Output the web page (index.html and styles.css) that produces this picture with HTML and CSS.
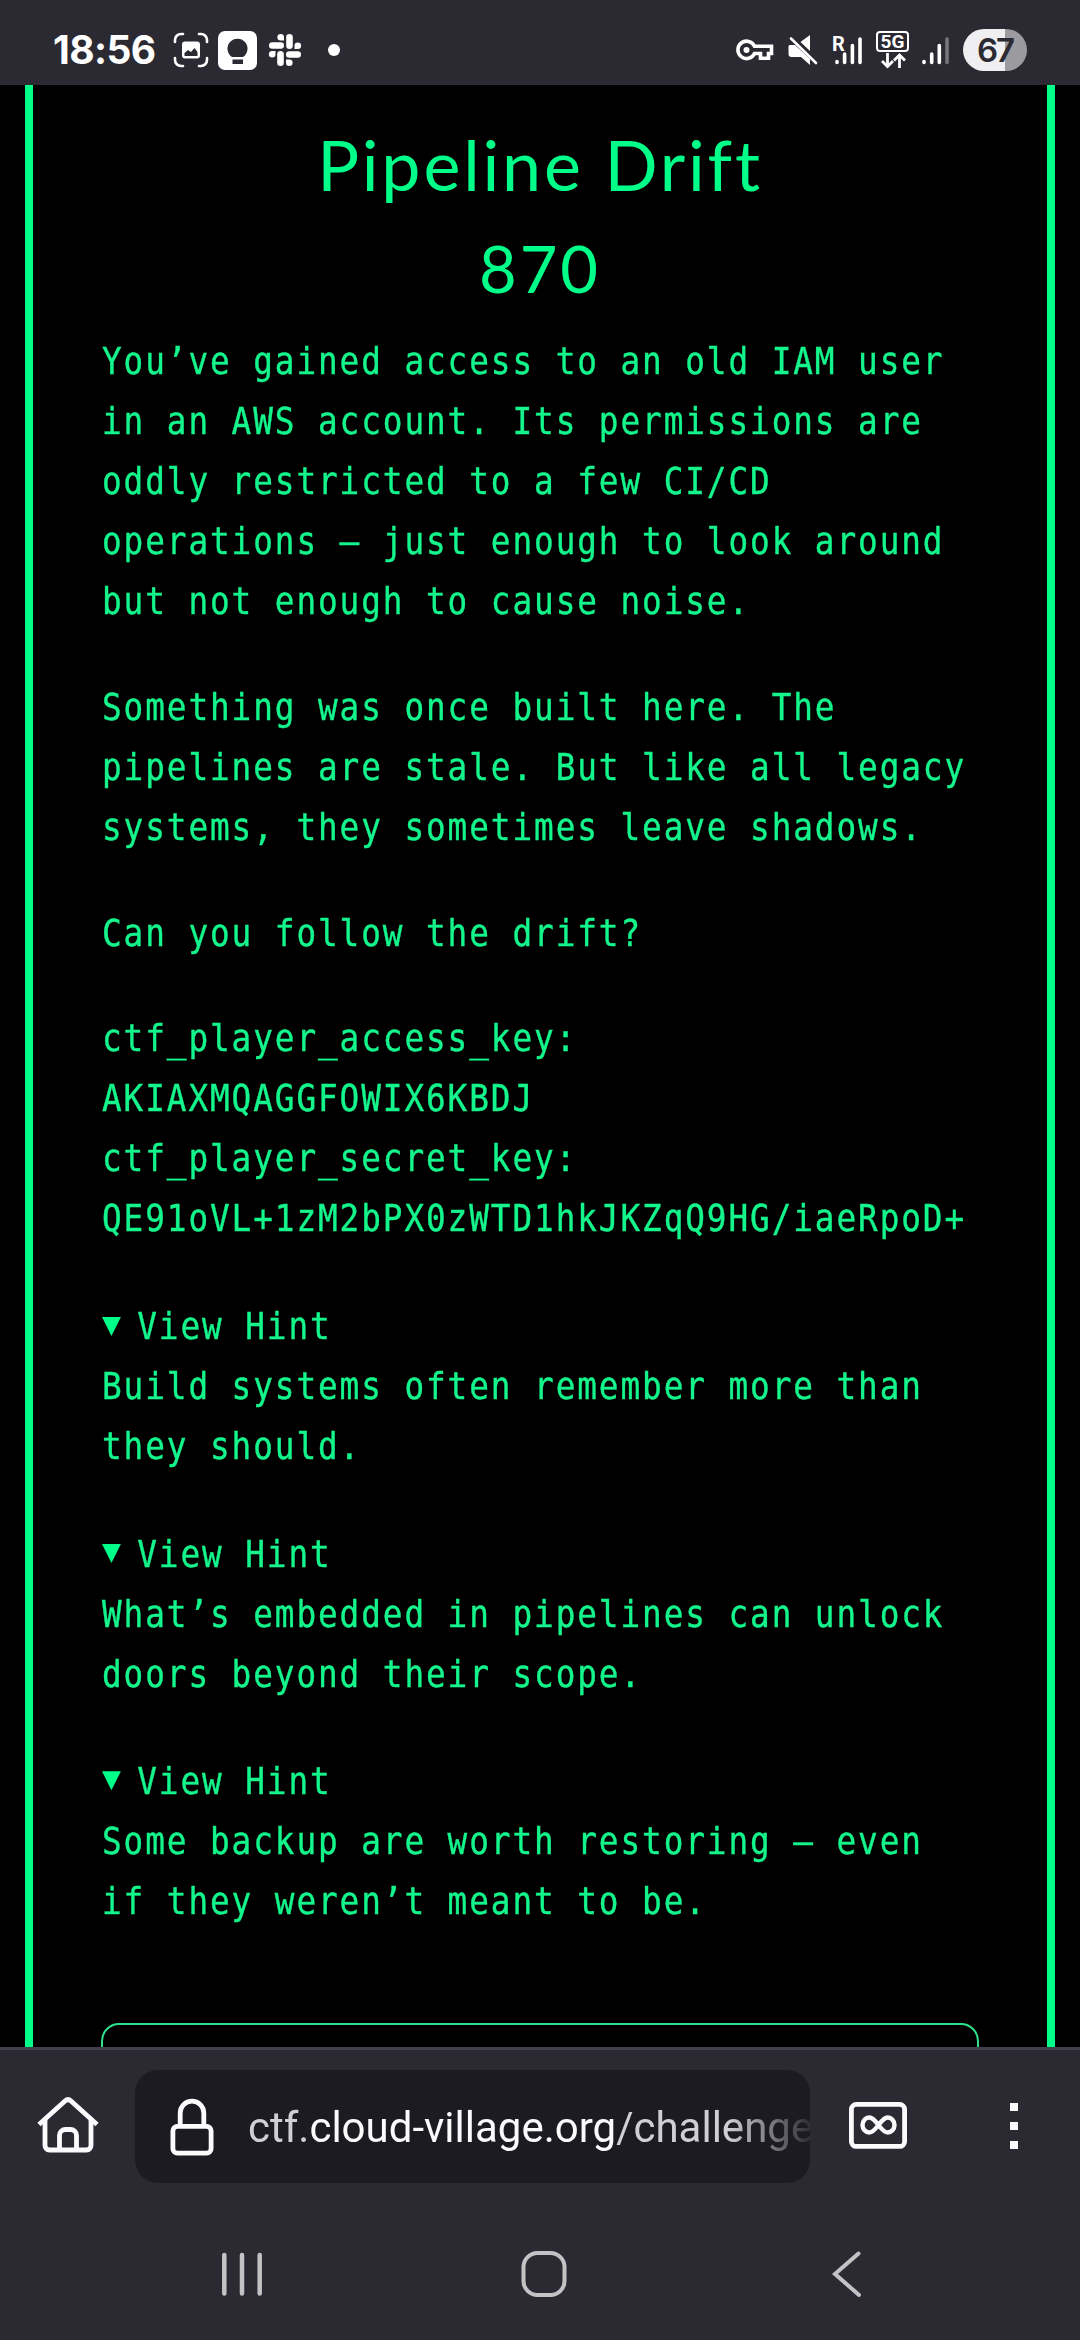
FILE: index.html
```html
<!DOCTYPE html>
<html lang="en">
<head>
<meta charset="utf-8">
<title>Pipeline Drift</title>
<link rel="stylesheet" href="styles.css">
</head>
<body>
<div class="screen">
  <header class="status">
    <div class="status-left">
      <span class="clock">18:56</span>
      <svg class="i-shot" width="36" height="36" viewBox="0 0 36 36" fill="none" stroke="#fff" stroke-width="2.6" stroke-linecap="round"><path d="M2 10V8a6 6 0 0 1 6-6h2M26 2h2a6 6 0 0 1 6 6v2M34 26v2a6 6 0 0 1-6 6h-2M10 34H8a6 6 0 0 1-6-6v-2"/><path fill="#fff" stroke="none" fill-rule="evenodd" d="M12 9.500h12a3 3 0 0 1 3 3v11a3 3 0 0 1-3 3H12a3 3 0 0 1-3-3v-11a3 3 0 0 1 3-3zM11.500 24h13v-4l-3-4-3.500 4-3-2-3.500 3z"/></svg>
      <svg class="i-bulb" width="39" height="39" viewBox="0 0 39 39"><rect width="39" height="39" rx="7" fill="#fff"/><path fill="#2b2a33" d="M14 26a10 10 0 1 1 11 0zM14.500 28.500h10.500v4.500h-10.500z"/></svg>
      <svg class="i-slack" width="34" height="34" viewBox="0 0 34 34"><g fill="#fff"><rect x="1" y="9.200" width="15" height="6.600" rx="3.300"/><path d="M16 7.500h-3.300a3.300 3.300 0 1 1 3.300-3.300z"/></g><g fill="#fff" transform="rotate(90 17 17)"><rect x="1" y="9.200" width="15" height="6.600" rx="3.300"/><path d="M16 7.500h-3.300a3.300 3.300 0 1 1 3.300-3.300z"/></g><g fill="#fff" transform="rotate(180 17 17)"><rect x="1" y="9.200" width="15" height="6.600" rx="3.300"/><path d="M16 7.500h-3.300a3.300 3.300 0 1 1 3.300-3.300z"/></g><g fill="#fff" transform="rotate(270 17 17)"><rect x="1" y="9.200" width="15" height="6.600" rx="3.300"/><path d="M16 7.500h-3.300a3.300 3.300 0 1 1 3.300-3.300z"/></g></svg>
      <span class="more-dot"></span>
    </div>
    <div class="status-right">
      <svg class="i-key" width="38" height="22" viewBox="0 0 38 22" fill="none" stroke="#fff" stroke-width="3.600"><path d="M18.500 7.200H35.500V14.500H32.500V19.200H24.500V14.500H18.500A8.700 8.700 0 1 1 18.500 7.200z"/><circle cx="10.500" cy="11" r="3" fill="#fff" stroke="none"/></svg>
      <svg class="i-mute" width="30" height="30" viewBox="0 0 30 30"><path fill="#fff" d="M22 0v16L12.500 7zM1.500 10H7L22 24v6l-9-8H3.500a3 3 0 0 1-3-3v-8z"/><path stroke="#fff" stroke-width="2.600" stroke-linecap="round" d="M3 3.500L28 28"/></svg>
      <div class="roaming">
        <svg width="31" height="32" viewBox="0 0 31 32" stroke="#fff" stroke-width="3.600" stroke-linecap="round"><path d="M6 27.500v1M13.600 20v8.500M21.400 11.500v17M29 5v23.500"/></svg>
        <span class="r-mark">R</span>
      </div>
      <div class="fiveg">
        <span class="fiveg-box">5G</span>
        <svg width="24" height="16" viewBox="0 0 24 16" fill="none" stroke="#fff" stroke-width="2.800"><path d="M6.500 0v13M1 8l5.500 5.500L12 8M18.500 15V2M13 7.500L18.500 2 24 7.500"/></svg>
      </div>
      <svg class="i-signal" width="28" height="32" viewBox="0 0 28 32" stroke="#fff" stroke-width="3.600" stroke-linecap="round"><path d="M2 27.500v1M9.700 20v8.500M17.300 11.500v17"/><path stroke="#77767d" d="M25 5v23.500"/></svg>
      <span class="battery">67</span>
    </div>
  </header>

  <main class="page">
    <article class="challenge">
      <h1 class="name">Pipeline Drift</h1>
      <h2 class="points">870</h2>
      <div class="description">
        <p>You’ve gained access to an old IAM user<br>in an AWS account. Its permissions are<br>oddly restricted to a few CI/CD<br>operations – just enough to look around<br>but not enough to cause noise.</p>
        <p>Something was once built here. The<br>pipelines are stale. But like all legacy<br>systems, they sometimes leave shadows.</p>
        <p>Can you follow the drift?</p>
        <p class="keys">ctf_player_access_key:<br>AKIAXMQAGGFOWIX6KBDJ<br>ctf_player_secret_key:<br>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</p>
        <details open><summary>View Hint</summary>Build systems often remember more than<br>they should.</details>
        <details open><summary>View Hint</summary>What’s embedded in pipelines can unlock<br>doors beyond their scope.</details>
        <details open><summary>View Hint</summary>Some backup are worth restoring – even<br>if they weren’t meant to be.</details>
      </div>
      <div class="flag-field"></div>
    </article>
  </main>

  <div class="toolbar">
    <svg class="i-home" width="62" height="58" viewBox="0 0 62 58" fill="none" stroke="#fbfbfe" stroke-width="4.800"><path d="M2 28.500L28 5q3-2.800 6 0l26 23.500"/><path d="M8 24v25.500a4.500 4.500 0 0 0 4.500 4.500h37a4.500 4.500 0 0 0 4.500-4.500V24M22.500 54V39.500a6 6 0 0 1 6-6h5a6 6 0 0 1 6 6V54"/></svg>
    <div class="urlbar">
      <svg class="i-lock" width="44" height="60" viewBox="0 0 44 60" fill="none" stroke="#fbfbfe" stroke-width="4.800"><rect x="2.900" y="29.400" width="38.200" height="26.800" rx="4.500"/><path d="M10.200 29V16a11.800 11.800 0 0 1 23.600 0v13"/></svg>
      <div class="url"><span class="dim">ctf.</span>cloud-village.org<span class="dim">/challenge</span></div>
    </div>
    <svg class="i-tabs" width="60" height="48" viewBox="0 0 60 48" fill="none" stroke="#fbfbfe" stroke-width="4.800"><rect x="3.400" y="3.400" width="53.200" height="42" rx="5"/><path stroke-width="4.400" d="M30.500 24C26 18 24 16.500 21.300 16.500a6.800 7.500 0 0 0 0 15C24 31.500 26 30 30.500 24S37 16.500 39.700 16.500a6.800 7.500 0 0 1 0 15C37 31.500 35 30 30.500 24z"/></svg>
    <svg class="i-menu" width="8" height="48" viewBox="0 0 8 48" fill="#fbfbfe"><path d="M0 1h8v8H0zM0 20h8v8H0zM0 39h8v8H0z"/></svg>
  </div>

  <nav class="sysnav">
    <svg class="i-recents" width="42" height="46" viewBox="0 0 42 46" stroke="#c3c3c5" stroke-width="4.500" stroke-linecap="round"><path d="M3.300 4v38.500M21 4v38.500M38.700 4v38.500"/></svg>
    <svg class="i-circle" width="46" height="46" viewBox="0 0 46 46" fill="none" stroke="#c3c3c5" stroke-width="4"><rect x="2.500" y="2" width="41" height="42" rx="14"/></svg>
    <svg class="i-back" width="30" height="46" viewBox="0 0 30 46" fill="none" stroke="#c3c3c5" stroke-width="4" stroke-linecap="round"><path d="M26.500 2.500L3 23l24 21"/></svg>
  </nav>
</div>
</body>
</html>
```
FILE: styles.css
```css
* { box-sizing: border-box; }
body { margin: 0; background: #000; }
svg { display: block; flex: none; overflow: visible; }

.screen {
  width: 1080px;
  height: 2340px;
  display: flex;
  flex-direction: column;
  overflow: hidden;
  background: #2b2a33;
  color: #fff;
}

/* Status bar */
.status {
  flex: none;
  height: 85px;
  padding: 15px 53px 0;
  display: flex;
  justify-content: space-between;
}
.status-left, .status-right { display: flex; align-items: center; height: 70px; }
.clock {
  width: 120px;
  font: 700 39px/70px Inter, sans-serif;
  letter-spacing: -0.6px;
}
.i-bulb { margin-left: 9px; }
.i-slack { margin-left: 11px; }
.more-dot { width: 12px; height: 12px; margin-left: 26px; border-radius: 50%; background: #fff; }
.i-mute { margin-left: 14px; }
.roaming { position: relative; margin-left: 13px; }
.r-mark {
  position: absolute;
  left: 1px;
  top: 0;
  font: 700 20px/20px Roboto, sans-serif;
}
.fiveg {
  display: flex;
  flex-direction: column;
  align-items: center;
  margin-left: 14px;
  width: 33px;
  height: 38px;
}
.fiveg-box {
  width: 33px;
  height: 21px;
  border: 2px solid #fff;
  border-radius: 4px;
  font: 700 19px/18px Roboto, sans-serif;
  text-align: center;
}
.fiveg svg { margin-top: 1px; }
.i-signal { margin-left: 13px; }
.battery {
  width: 64px;
  height: 42px;
  margin-left: 13px;
  border-radius: 21px;
  background: linear-gradient(90deg, #efeff1 42px, #9b9a9f 42px);
  color: #2b2a33;
  font: 600 33px/43px Inter, sans-serif;
  letter-spacing: -2px;
  text-align: center;
}

/* Challenge page */
.page {
  flex: none;
  height: 1962px;
  padding: 0 25px;
  overflow: hidden;
  background: #000;
}
.challenge {
  height: 2100px;
  padding: 27px 68px 0;
  border: 0 solid #00ff88;
  border-width: 0 8px;
  color: #00ff88;
}
.name, .points {
  margin: 0;
  font-family: Lato, sans-serif;
  font-weight: 400;
  text-align: center;
}
.name { font-size: 70px; line-height: 104px; letter-spacing: 2.8px; }
.points { margin-top: 1px; font-size: 65px; line-height: 102px; letter-spacing: 3px; }
.description {
  width: 1024px;
  height: 1626px;
  margin: 12px 0 0 1px;
  transform: scaleX(0.86);
  transform-origin: 0 0;
  color: #14f58c;
  font: 38px/60px "DejaVu Sans Mono", monospace;
  letter-spacing: 2.24px;
  white-space: nowrap;
  -webkit-text-stroke: 0.4px #14f58c;
}
.description p { margin: 0 0 45.8px; }
.description .keys { margin-bottom: 48px; }
.description details { margin-bottom: 47.2px; }
.description summary { display: flex; align-items: center; list-style: none; }
.description summary::before {
  content: "";
  width: 22px;
  height: 19px;
  margin: 0 19px 0 0;
  background: #00ff88;
  clip-path: polygon(0 0, 100% 0, 50% 100%);
}
.flag-field {
  height: 120px;
  margin-top: 66px;
  border: 2px solid #2fe08b;
  border-radius: 18px;
}

/* Browser toolbar */
.toolbar {
  flex: none;
  height: 160px;
  padding: 20px 0 0 37px;
  border-top: 3px solid #42414d;
  display: flex;
  align-items: flex-start;
}
.i-home { margin-top: 26px; }
.urlbar {
  width: 675px;
  height: 113px;
  margin-left: 36px;
  padding-left: 35px;
  border-radius: 23px;
  background: #1c1b22;
  display: flex;
  align-items: center;
  overflow: hidden;
}
.url {
  width: 563px;
  margin: 2px 0 0 34px;
  flex: none;
  white-space: nowrap;
  color: #fbfbfe;
  font: 42px/60px Roboto, sans-serif;
  -webkit-mask-image: linear-gradient(90deg, #000 480px, transparent 572px);
  mask-image: linear-gradient(90deg, #000 480px, transparent 572px);
}
.dim { color: #cfcfd8; }
.i-tabs { margin: 31px 0 0 38px; }
.i-menu { margin: 32px 0 0 102px; }

/* System navigation */
.sysnav {
  flex: 1;
  display: flex;
  align-items: flex-start;
  padding: 44px 0 0 221px;
}
.i-circle { margin-left: 258px; }
.i-back { margin-left: 265px; }
```
